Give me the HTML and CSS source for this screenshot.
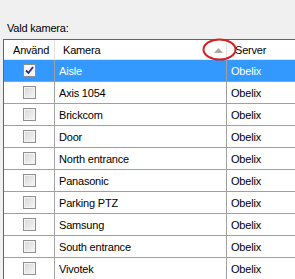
FILE: index.html
```html
<!DOCTYPE html>
<html>
<head>
<meta charset="utf-8">
<link rel="stylesheet" href="styles.css">
</head>
<body>
<div class="panel">
  <div class="label">Vald kamera:</div>
  <div class="grid">
    <div class="row head">
      <div class="c1">Använd</div>
      <div class="c2"><span>Kamera</span><svg class="sort" width="9" height="5" viewBox="0 0 9 5"><polygon points="0,5 4.5,0 9,5" fill="#a8a8a8"/></svg></div>
      <div class="c3">Server</div>
    </div>
    <div class="row sel">
      <div class="c1"><span class="cb on"><svg width="11" height="11" viewBox="0 0 11 11"><path d="M2 5.5 L4.5 8 L9 2" fill="none" stroke="#2b2b8f" stroke-width="1.8"/></svg></span></div>
      <div class="c2">Aisle</div>
      <div class="c3">Obelix</div>
    </div>
    <div class="row"><div class="c1"><span class="cb"></span></div><div class="c2">Axis 1054</div><div class="c3">Obelix</div></div>
    <div class="row"><div class="c1"><span class="cb"></span></div><div class="c2">Brickcom</div><div class="c3">Obelix</div></div>
    <div class="row"><div class="c1"><span class="cb"></span></div><div class="c2">Door</div><div class="c3">Obelix</div></div>
    <div class="row"><div class="c1"><span class="cb"></span></div><div class="c2">North entrance</div><div class="c3">Obelix</div></div>
    <div class="row"><div class="c1"><span class="cb"></span></div><div class="c2">Panasonic</div><div class="c3">Obelix</div></div>
    <div class="row"><div class="c1"><span class="cb"></span></div><div class="c2">Parking PTZ</div><div class="c3">Obelix</div></div>
    <div class="row"><div class="c1"><span class="cb"></span></div><div class="c2">Samsung</div><div class="c3">Obelix</div></div>
    <div class="row"><div class="c1"><span class="cb"></span></div><div class="c2">South entrance</div><div class="c3">Obelix</div></div>
    <div class="row"><div class="c1"><span class="cb"></span></div><div class="c2">Vivotek</div><div class="c3">Obelix</div></div>
  </div>
  <svg class="mark" width="35" height="23" viewBox="0 0 35 23"><ellipse cx="17.5" cy="11.5" rx="16" ry="10" fill="none" stroke="#d42222" stroke-width="2"/></svg>
</div>
</body>
</html>
```
FILE: styles.css
```css
html, body {
  margin: 0;
  padding: 0;
}
body {
  background: #f0f0f0;
  font-family: "Liberation Sans", Arial, sans-serif;
  font-size: 11px;
  letter-spacing: -0.2px;
  color: #000;
  width: 295px;
  height: 279px;
  overflow: hidden;
}
.panel {
  position: relative;
  height: 279px;
  overflow: hidden;
}
.label {
  padding: 22px 0 0 7px;
  line-height: 13px;
  height: 13px;
  margin-bottom: 4px;
}
.grid {
  margin-left: 3px;
  width: 292px;
  height: 244px;
  overflow: hidden;
  border-top: 1px solid #646464;
  border-left: 1px solid #646464;
  background: #fff;
  box-sizing: border-box;
}
.row {
  display: flex;
  height: 22px;
  box-sizing: border-box;
  border-bottom: 1px solid #a0a0a0;
  white-space: nowrap;
}
.row > div {
  display: flex;
  align-items: center;
  box-sizing: border-box;
}
.c1 {
  width: 51px;
  border-right: 1px solid #a0a0a0;
  justify-content: center;
}
.c2 {
  width: 172px;
  border-right: 1px solid #a0a0a0;
  padding-left: 4px;
}
.c3 {
  flex: 1;
  padding-left: 4px;
}
.head {
  height: 20px;
  border-bottom: 1px solid #e3e3e3;
  background: #fff;
}
.head .c1 {
  justify-content: flex-start;
  padding-left: 9px;
  border-right-color: #e3e3e3;
}
.head .c2 {
  padding-left: 8px;
  border-right-color: #e3e3e3;
}
.head .c3 {
  padding-left: 8px;
}
.sort {
  margin-left: auto;
  margin-right: 3px;
  margin-top: 1px;
}
.sel {
  background: #3399ff;
  color: #fff;
}
.cb {
  display: block;
  width: 13px;
  height: 13px;
  box-sizing: border-box;
  border: 1px solid #8e8f8f;
  background: linear-gradient(135deg, #d6d6d6 0%, #eaeaea 60%, #f8f8f8 100%);
  box-shadow: inset 0 0 0 1px #f4f4f4;
  margin-left: 1px;
}
.cb.on {
  background: #f6f6fb;
  box-shadow: none;
}
.cb.on svg {
  display: block;
  margin: 0;
}
.mark {
  position: absolute;
  left: 202px;
  top: 38px;
}
```
